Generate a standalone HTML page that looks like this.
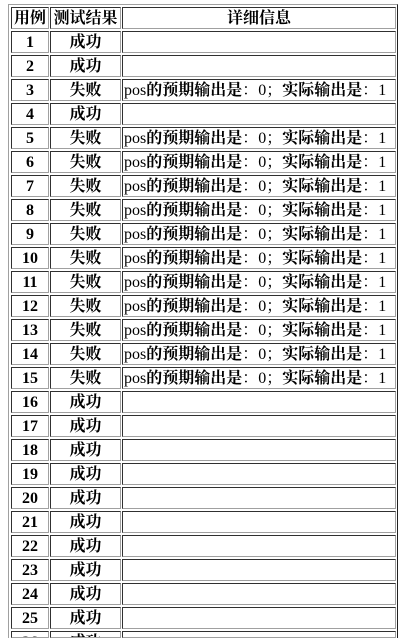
<!DOCTYPE html>
<html><head><meta charset="utf-8"><style>
html,body{margin:0;padding:0;background:#fff;width:414px;height:639px;overflow:hidden;position:relative}
.o{position:absolute;left:8px;top:4px;width:388px;height:633px;border:1px solid;border-bottom:0;border-color:#a0a0a0 #202020 #202020 #a0a0a0}
.c{position:absolute;height:20px;border:1px solid;border-color:#303030 #a0a0a0 #a0a0a0 #303030;font:16px/22px "Liberation Serif","Noto Serif CJK SC",serif;color:#000;text-align:center;white-space:nowrap;overflow:hidden}
.c.l{height:5px}
.a{left:11px;width:36px;font-weight:bold}
.b{left:50px;width:69px}
.d{left:122px;text-align:left;padding-left:1px;width:271px}
b{font-weight:bold}
</style></head><body>
<div class="o"></div>
<div id="t"></div>
<script>
var h='<div class="c a" style="top:7px"><b>用例</b></div><div class="c b" style="top:7px"><b>测试结果</b></div><div class="c d" style="top:7px;text-align:center;padding-left:0;width:272px"><b>详细信息</b></div>';
var fail={3:1,5:1,6:1,7:1,8:1,9:1,10:1,11:1,12:1,13:1,14:1,15:1};
var msg='pos<b>的预期输出是</b>：0；<b>实际输出是</b>：1';
for(var i=1;i<=26;i++){var t=7+24*i;var l=i==26?' l':'';
h+='<div class="c a'+l+'" style="top:'+t+'px">'+i+'</div><div class="c b'+l+'" style="top:'+t+'px"><b>'+(fail[i]?'失败':'成功')+'</b></div><div class="c d'+l+'" style="top:'+t+'px">'+(fail[i]?msg:'')+'</div>';}
document.getElementById('t').innerHTML=h;
</script>
</body></html>
